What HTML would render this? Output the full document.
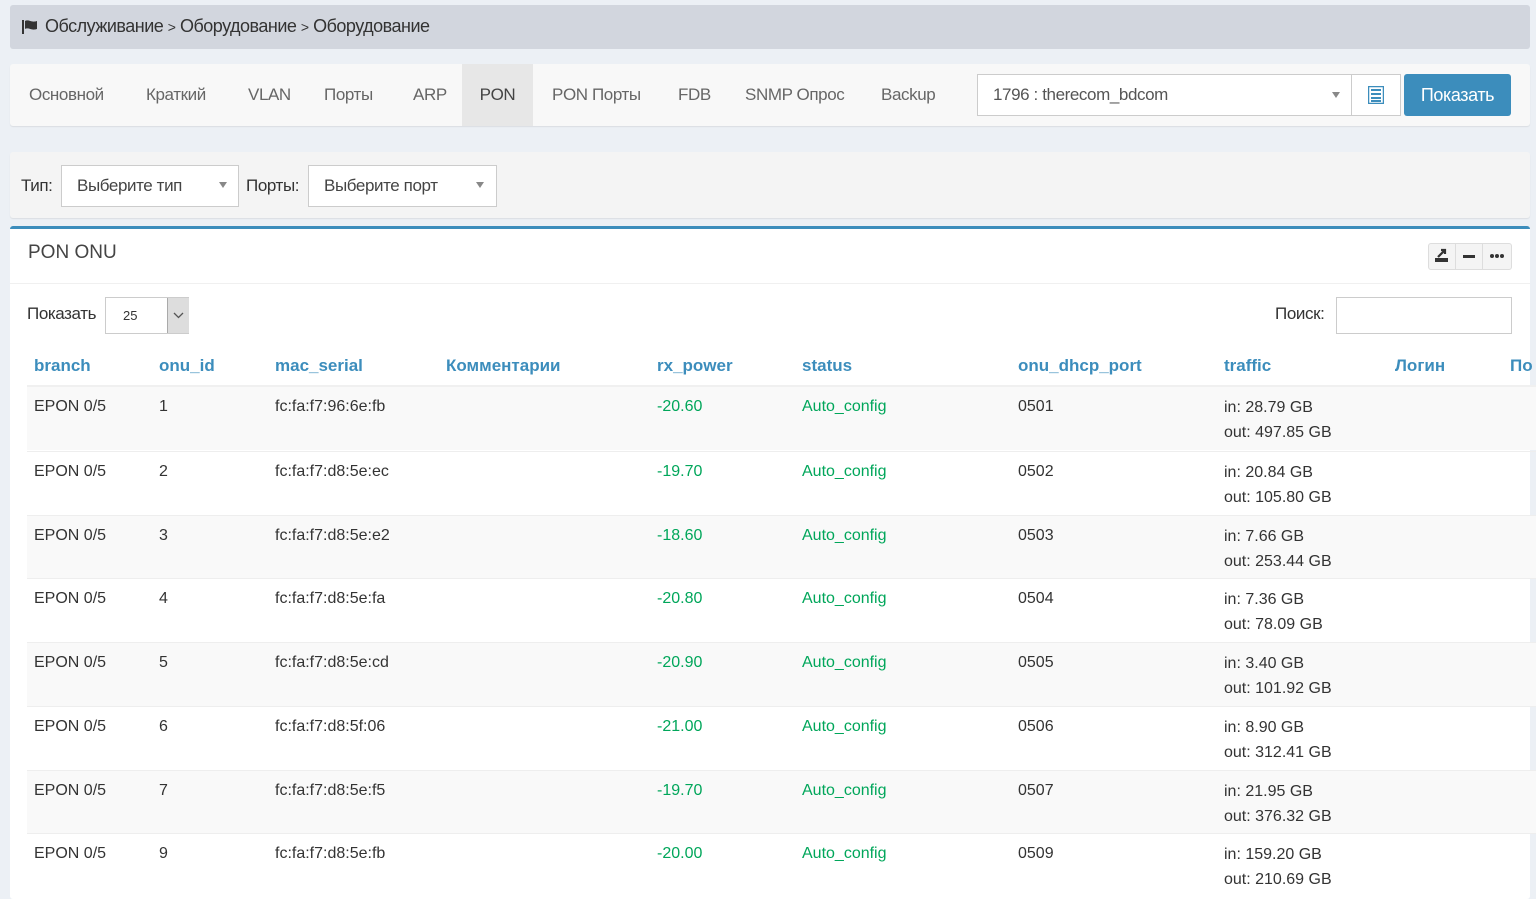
<!DOCTYPE html><html><head><meta charset="utf-8"><style>
body{margin:0;background:#ecf0f5;font-family:"Liberation Sans",sans-serif;width:1536px;height:888px;overflow:hidden;position:relative;color:#333}
.a{position:absolute}
.bc{left:10px;top:5px;width:1520px;height:44px;background:#d2d6de;border-radius:3px;font-size:18px;color:#333;letter-spacing:-0.5px}
.tabs{left:10px;top:64px;width:1520px;height:62px;background:#f8f8f8;border-radius:3px;box-shadow:0 1px 1px rgba(0,0,0,.08)}
.tab{position:absolute;top:0;height:62px;line-height:62px;font-size:17px;color:#666;letter-spacing:-0.4px}
.filt{left:10px;top:152px;width:1520px;height:66px;background:#f4f4f4;border-radius:3px;box-shadow:0 1px 1px rgba(0,0,0,.08)}
.sel{position:absolute;background:#fff;border:1px solid #ccc;font-size:17px;color:#444;letter-spacing:-0.4px}
.tri{position:absolute;width:0;height:0;border-left:4px solid transparent;border-right:4px solid transparent;border-top:6px solid #888}
.panel{left:10px;top:226px;width:1520px;height:670px;background:#fff;border-top:3px solid #3c8dbc;border-radius:3px}
th,td{text-align:left}
.th{position:absolute;top:356px;font-size:17px;font-weight:bold;color:#3c8dbc}
.row{position:absolute;left:27px;width:1509px;height:63px;border-top:1px solid #eee;font-size:16px}
.row span{position:absolute;top:11px}
.g{color:#00a65a}
</style></head><body>
<div class="a bc"><svg class="a" style="left:12px;top:15px" width="18" height="14" viewBox="0 0 18 14"><rect x="0" y="0" width="2" height="14" fill="#333"/><path d="M3 1 C7 -1 9 3 15 1 L15 9 C9 11 7 7 3 9Z" fill="#333"/></svg><span class="a" style="left:35px;top:11px">Обслуживание <span style="font-size:14px">&gt;</span> Оборудование <span style="font-size:14px">&gt;</span> Оборудование</span></div>
<div class="a tabs">
<div class="tab" style="left:19px">Основной</div><div class="tab" style="left:136px">Краткий</div><div class="tab" style="left:238px">VLAN</div><div class="tab" style="left:314px">Порты</div><div class="tab" style="left:403px">ARP</div>
<div class="tab" style="left:452px;width:71px;background:#e7e7e7;color:#444;text-align:center">PON</div>
<div class="tab" style="left:542px">PON Порты</div><div class="tab" style="left:668px">FDB</div><div class="tab" style="left:735px">SNMP Опрос</div><div class="tab" style="left:871px">Backup</div>
<div class="sel" style="left:967px;top:10px;width:373px;height:40px;line-height:40px"><span style="margin-left:15px;color:#555">1796 : therecom_bdcom</span><div class="tri" style="left:354px;top:17px"></div></div>
<div class="sel" style="left:1341px;top:10px;width:48px;height:40px"><svg class="a" style="left:16px;top:11px" width="16" height="18" viewBox="0 0 16 18"><rect x="0.5" y="0.5" width="15" height="17" fill="none" stroke="#3c8dbc" stroke-width="1.5"/><g fill="#3c8dbc"><rect x="3" y="3" width="10" height="2"/><rect x="3" y="7" width="10" height="2"/><rect x="3" y="11" width="10" height="2"/><rect x="3" y="14" width="10" height="2"/></g></svg></div>
<div class="a" style="left:1394px;top:10px;width:107px;height:42px;background:#3c8dbc;border-radius:3px;color:#fff;font-size:18px;line-height:42px;text-align:center;letter-spacing:-0.4px">Показать</div>
</div>
<div class="a filt">
<span class="a" style="left:11px;top:24px;font-size:17px;letter-spacing:-0.4px">Тип:</span>
<div class="sel" style="left:51px;top:13px;width:176px;height:40px;line-height:40px"><span style="margin-left:15px">Выберите тип</span><div class="tri" style="left:157px;top:16px"></div></div>
<span class="a" style="left:236px;top:24px;font-size:17px;letter-spacing:-0.4px">Порты:</span>
<div class="sel" style="left:298px;top:13px;width:187px;height:40px;line-height:40px"><span style="margin-left:15px">Выберите порт</span><div class="tri" style="left:167px;top:16px"></div></div>
</div>
<div class="a panel">
<span class="a" style="left:18px;top:13px;font-size:19px;color:#444">PON ONU</span>
<div class="a" style="left:1418px;top:14px;width:82px;height:25px;background:#f4f4f4;border:1px solid #ddd;border-radius:3px"></div>
<div class="a" style="left:1445px;top:14px;width:1px;height:27px;background:#ddd"></div><div class="a" style="left:1472px;top:14px;width:1px;height:27px;background:#ddd"></div>
<svg class="a" style="left:1424px;top:18px" width="16" height="16" viewBox="0 0 16 16"><rect x="1" y="11" width="13" height="4" fill="#333"/><path d="M4 10 L11 3 M7 3 L11 3 L11 7" stroke="#333" stroke-width="2.2" fill="none"/></svg>
<div class="a" style="left:1453px;top:26px;width:12px;height:3px;background:#333"></div>
<div class="a" style="left:1480px;top:25px;font-size:0"><span style="display:inline-block;width:4px;height:4px;border-radius:2px;background:#333;margin-right:1px"></span><span style="display:inline-block;width:4px;height:4px;border-radius:2px;background:#333;margin-right:1px"></span><span style="display:inline-block;width:4px;height:4px;border-radius:2px;background:#333"></span></div>
<div class="a" style="left:0;top:54px;width:1520px;height:1px;background:#f0f0f0"></div>
</div>
<span class="a" style="left:27px;top:304px;font-size:17px;letter-spacing:-0.4px">Показать</span>
<div class="a" style="left:105px;top:297px;width:82px;height:35px;border:1px solid #ccc;background:#fff"><span class="a" style="left:17px;top:10px;font-size:13px">25</span><div class="a" style="left:61px;top:0;width:21px;height:35px;background:#ddd;border-left:1px solid #aaa"><svg class="a" style="left:5px;top:14px" width="11" height="7"><path d="M1 1 L5.5 5.5 L10 1" stroke="#555" fill="none" stroke-width="1.3"/></svg></div></div>
<span class="a" style="left:1275px;top:304px;font-size:17px;letter-spacing:-0.4px">Поиск:</span>
<div class="a" style="left:1336px;top:297px;width:174px;height:35px;border:1px solid #ccc;background:#fff"></div>
<div class="th" style="left:34px">branch</div><div class="th" style="left:159px">onu_id</div><div class="th" style="left:275px">mac_serial</div><div class="th" style="left:446px">Комментарии</div><div class="th" style="left:657px">rx_power</div><div class="th" style="left:802px">status</div><div class="th" style="left:1018px">onu_dhcp_port</div><div class="th" style="left:1224px">traffic</div><div class="th" style="left:1395px">Логин</div><div class="th" style="left:1510px">По</div>
<div class="a" style="left:27px;top:385px;width:1509px;height:2px;background:#f0f0f0"></div>
<div class="row" style="top:387px;background:#f9f9f9;border-top:none"><span style="left:7px">EPON 0/5</span><span style="left:132px">1</span><span style="left:248px">fc:fa:f7:96:6e:fb</span><span class="g" style="left:630px">-20.60</span><span class="g" style="left:775px">Auto_config</span><span style="left:991px">0501</span><span style="left:1197px;line-height:25px;top:8px">in: 28.79 GB<br>out: 497.85 GB</span></div>
<div class="row" style="top:451px"><span style="left:7px">EPON 0/5</span><span style="left:132px">2</span><span style="left:248px">fc:fa:f7:d8:5e:ec</span><span class="g" style="left:630px">-19.70</span><span class="g" style="left:775px">Auto_config</span><span style="left:991px">0502</span><span style="left:1197px;line-height:25px;top:8px">in: 20.84 GB<br>out: 105.80 GB</span></div>
<div class="row" style="top:515px;background:#f9f9f9"><span style="left:7px">EPON 0/5</span><span style="left:132px">3</span><span style="left:248px">fc:fa:f7:d8:5e:e2</span><span class="g" style="left:630px">-18.60</span><span class="g" style="left:775px">Auto_config</span><span style="left:991px">0503</span><span style="left:1197px;line-height:25px;top:8px">in: 7.66 GB<br>out: 253.44 GB</span></div>
<div class="row" style="top:578px"><span style="left:7px">EPON 0/5</span><span style="left:132px">4</span><span style="left:248px">fc:fa:f7:d8:5e:fa</span><span class="g" style="left:630px">-20.80</span><span class="g" style="left:775px">Auto_config</span><span style="left:991px">0504</span><span style="left:1197px;line-height:25px;top:8px">in: 7.36 GB<br>out: 78.09 GB</span></div>
<div class="row" style="top:642px;background:#f9f9f9"><span style="left:7px">EPON 0/5</span><span style="left:132px">5</span><span style="left:248px">fc:fa:f7:d8:5e:cd</span><span class="g" style="left:630px">-20.90</span><span class="g" style="left:775px">Auto_config</span><span style="left:991px">0505</span><span style="left:1197px;line-height:25px;top:8px">in: 3.40 GB<br>out: 101.92 GB</span></div>
<div class="row" style="top:706px"><span style="left:7px">EPON 0/5</span><span style="left:132px">6</span><span style="left:248px">fc:fa:f7:d8:5f:06</span><span class="g" style="left:630px">-21.00</span><span class="g" style="left:775px">Auto_config</span><span style="left:991px">0506</span><span style="left:1197px;line-height:25px;top:8px">in: 8.90 GB<br>out: 312.41 GB</span></div>
<div class="row" style="top:770px;background:#f9f9f9"><span style="left:7px">EPON 0/5</span><span style="left:132px">7</span><span style="left:248px">fc:fa:f7:d8:5e:f5</span><span class="g" style="left:630px">-19.70</span><span class="g" style="left:775px">Auto_config</span><span style="left:991px">0507</span><span style="left:1197px;line-height:25px;top:8px">in: 21.95 GB<br>out: 376.32 GB</span></div>
<div class="row" style="top:833px"><span style="left:7px">EPON 0/5</span><span style="left:132px">9</span><span style="left:248px">fc:fa:f7:d8:5e:fb</span><span class="g" style="left:630px">-20.00</span><span class="g" style="left:775px">Auto_config</span><span style="left:991px">0509</span><span style="left:1197px;line-height:25px;top:8px">in: 159.20 GB<br>out: 210.69 GB</span></div>
</body></html>
